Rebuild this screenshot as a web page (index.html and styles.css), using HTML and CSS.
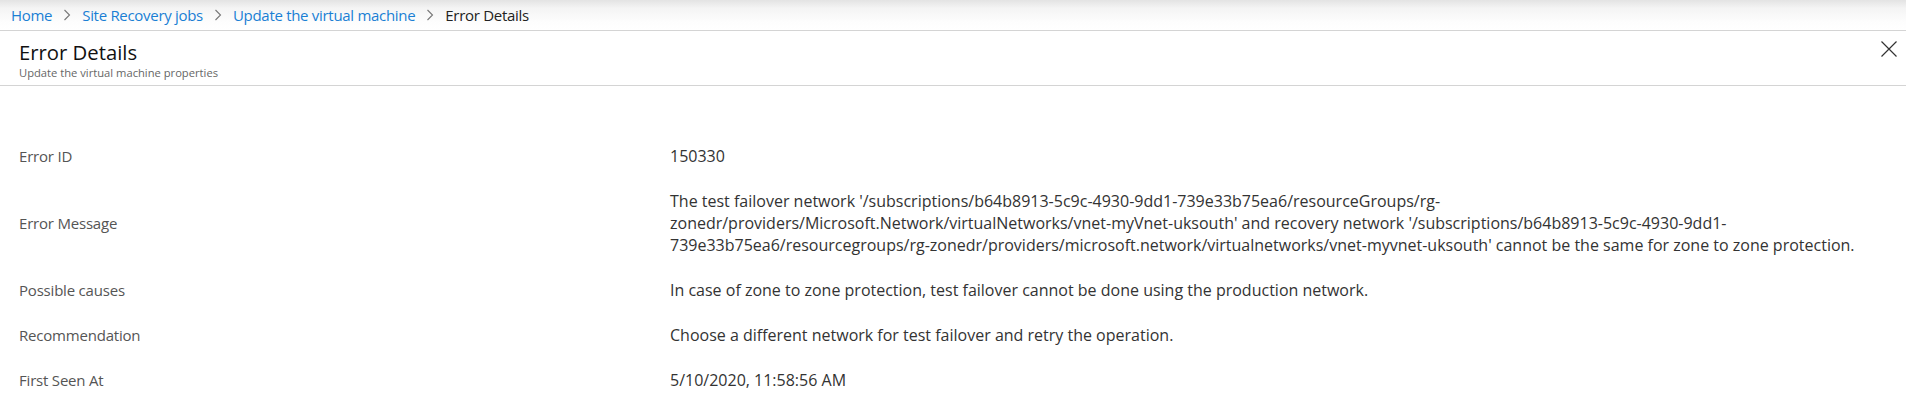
FILE: index.html
```html
<!DOCTYPE html>
<html lang="en">
<head>
<meta charset="utf-8">
<title>Error Details</title>
<link rel="stylesheet" href="styles.css">
</head>
<body>
<nav class="crumbs">
  <a class="crumb" href="#">Home</a>
  <span class="sep"><svg width="8" height="12" viewBox="0 0 8 12"><path d="M1.5 1 L6.5 6 L1.5 11" fill="none" stroke="#777" stroke-width="1.1"/></svg></span>
  <a class="crumb" href="#">Site Recovery jobs</a>
  <span class="sep"><svg width="8" height="12" viewBox="0 0 8 12"><path d="M1.5 1 L6.5 6 L1.5 11" fill="none" stroke="#777" stroke-width="1.1"/></svg></span>
  <a class="crumb" href="#">Update the virtual machine</a>
  <span class="sep"><svg width="8" height="12" viewBox="0 0 8 12"><path d="M1.5 1 L6.5 6 L1.5 11" fill="none" stroke="#777" stroke-width="1.1"/></svg></span>
  <span class="crumb current">Error Details</span>
</nav>
<header class="blade-head">
  <div class="titles">
    <h1 class="title">Error Details</h1>
    <div class="subtitle">Update the virtual machine properties</div>
  </div>
  <button class="close" aria-label="Close"><svg width="16" height="16" viewBox="0 0 16 16"><path d="M0.5 0.5 L15.5 15.5 M15.5 0.5 L0.5 15.5" stroke="#333" stroke-width="1.2" fill="none"/></svg></button>
</header>
<main class="details">
  <div class="row"><div class="label">Error ID</div><div class="value">150330</div></div>
  <div class="row"><div class="label">Error Message</div><div class="value">The test failover network '/subscriptions/b64b8913-5c9c-4930-9dd1-739e33b75ea6/resourceGroups/rg-zonedr/providers/Microsoft.Network/virtualNetworks/vnet-myVnet-uksouth' and recovery network '/subscriptions/b64b8913-5c9c-4930-9dd1-739e33b75ea6/resourcegroups/rg-zonedr/providers/microsoft.network/virtualnetworks/vnet-myvnet-uksouth' cannot be the same for zone to zone protection.</div></div>
  <div class="row"><div class="label">Possible causes</div><div class="value">In case of zone to zone protection, test failover cannot be done using the production network.</div></div>
  <div class="row"><div class="label">Recommendation</div><div class="value">Choose a different network for test failover and retry the operation.</div></div>
  <div class="row"><div class="label">First Seen At</div><div class="value">5/10/2020, 11:58:56 AM</div></div>
</main>
</body>
</html>
```
FILE: styles.css
```css
html, body {
  margin: 0;
  padding: 0;
  background: #fff;
}
body {
  font-family: "Open Sans", "Noto Sans", sans-serif;
  color: #333;
}
.crumbs {
  height: 30px;
  display: flex;
  align-items: center;
  gap: 9px;
  padding-left: 11px;
  background: linear-gradient(to bottom, #e3e3e3 0px, #f4f4f4 8px, #fdfdfd 22px, #fff 30px);
  border-bottom: 1px solid #d4d4d4;
  font-size: 15px;
  letter-spacing: -0.3px;
}
.crumb {
  color: #1a7fd4;
  text-decoration: none;
}
.crumb.current {
  color: #222;
}
.sep {
  display: flex;
  align-items: center;
  padding: 0 2px;
}
.blade-head {
  display: flex;
  justify-content: space-between;
  align-items: flex-start;
  padding: 7px 9px 0 19px;
  height: 47px;
  border-bottom: 1px solid #d4d4d4;
}
.title {
  margin: 0;
  font-size: 20.3px;
  font-weight: 400;
  line-height: 28px;
  color: #111;
}
.subtitle {
  font-size: 11.2px;
  line-height: 14px;
  color: #666;
}
.close {
  border: 0;
  background: none;
  padding: 0;
  margin-top: 3px;
  width: 16px;
  height: 16px;
  cursor: pointer;
}
.details {
  padding: 59px 46px 0 19px;
  display: flex;
  flex-direction: column;
  gap: 23px;
}
.row {
  display: grid;
  grid-template-columns: 651px 1fr;
  align-items: center;
  line-height: 22px;
}
.label {
  color: #555;
  font-size: 15px;
  letter-spacing: -0.2px;
}
.value {
  color: #333;
  font-size: 16px;
}
```
